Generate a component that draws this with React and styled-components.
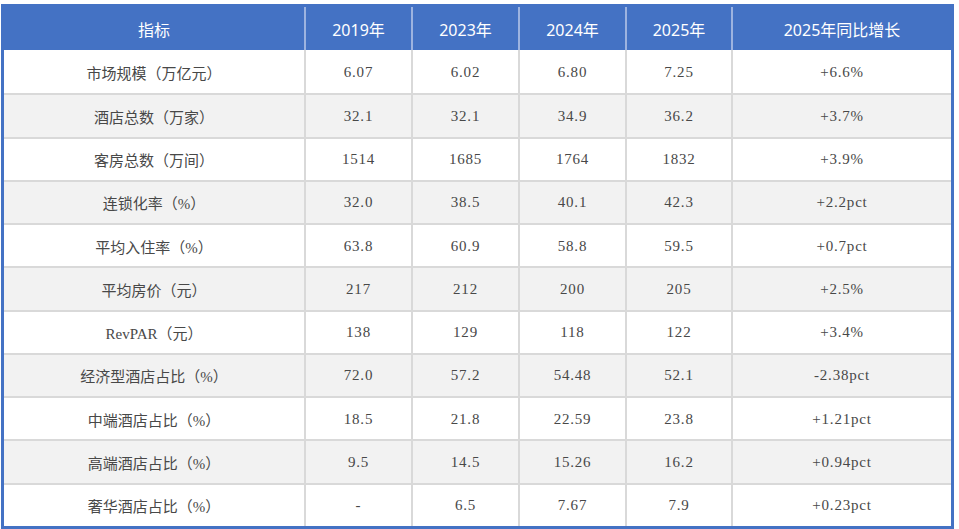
import React from "react";
import styled, { createGlobalStyle } from "styled-components";

const Global = createGlobalStyle`
  html, body { margin: 0; padding: 0; background: #ffffff; }
  body { font-family: "Liberation Serif", "Noto Sans CJK SC", serif; }
`;

const cols = "300px 107px 107px 107px 106px 1fr";

const Frame = styled.div`
  margin: 4px 5px 0 1px;
  border: 3px solid #4472c4;
  background: #ffffff;
`;

const HeaderRow = styled.div`
  display: grid;
  grid-template-columns: ${cols};
  height: 43px;
  background: #4472c4;
`;

const HeaderCell = styled.div`
  display: flex;
  align-items: center;
  justify-content: center;
  color: #ffffff;
  font-family: "Noto Sans", "Noto Sans CJK SC", sans-serif;
  font-size: 16px;
  box-sizing: border-box;
  border-left: ${(p) => (p.$first ? "none" : "2px solid #9db3e0")};
`;

const Row = styled.div`
  display: grid;
  grid-template-columns: ${cols};
  height: 43.27px;
  box-sizing: border-box;
  border-top: ${(p) => (p.$first ? "none" : "2px solid #d9d9d9")};
  background: ${(p) => (p.$alt ? "#f2f2f2" : "#ffffff")};
`;

const Cell = styled.div`
  display: flex;
  align-items: center;
  justify-content: center;
  box-sizing: border-box;
  padding-top: 1px;
  color: #484848;
  font-size: 15px;
  letter-spacing: ${(p) => (p.$label ? "0" : "0.8px")};
  font-family: "Liberation Serif", "Noto Sans CJK SC", serif;
  border-left: ${(p) => (p.$first ? "none" : "2px solid #d9d9d9")};
`;

const headers = ["指标", "2019年", "2023年", "2024年", "2025年", "2025年同比增长"];

const rows = [
  ["市场规模（万亿元）", "6.07", "6.02", "6.80", "7.25", "+6.6%"],
  ["酒店总数（万家）", "32.1", "32.1", "34.9", "36.2", "+3.7%"],
  ["客房总数（万间）", "1514", "1685", "1764", "1832", "+3.9%"],
  ["连锁化率（%）", "32.0", "38.5", "40.1", "42.3", "+2.2pct"],
  ["平均入住率（%）", "63.8", "60.9", "58.8", "59.5", "+0.7pct"],
  ["平均房价（元）", "217", "212", "200", "205", "+2.5%"],
  ["RevPAR（元）", "138", "129", "118", "122", "+3.4%"],
  ["经济型酒店占比（%）", "72.0", "57.2", "54.48", "52.1", "-2.38pct"],
  ["中端酒店占比（%）", "18.5", "21.8", "22.59", "23.8", "+1.21pct"],
  ["高端酒店占比（%）", "9.5", "14.5", "15.26", "16.2", "+0.94pct"],
  ["奢华酒店占比（%）", "-", "6.5", "7.67", "7.9", "+0.23pct"],
];

export default function App() {
  return (
    <>
      <Global />
      <Frame>
        <HeaderRow>
          {headers.map((h, i) => (
            <HeaderCell key={h} $first={i === 0}>
              {h}
            </HeaderCell>
          ))}
        </HeaderRow>
        {rows.map((r, ri) => (
          <Row key={r[0]} $first={ri === 0} $alt={ri % 2 === 1}>
            {r.map((c, ci) => (
              <Cell key={ci} $first={ci === 0} $label={ci === 0}>
                {c}
              </Cell>
            ))}
          </Row>
        ))}
      </Frame>
    </>
  );
}
